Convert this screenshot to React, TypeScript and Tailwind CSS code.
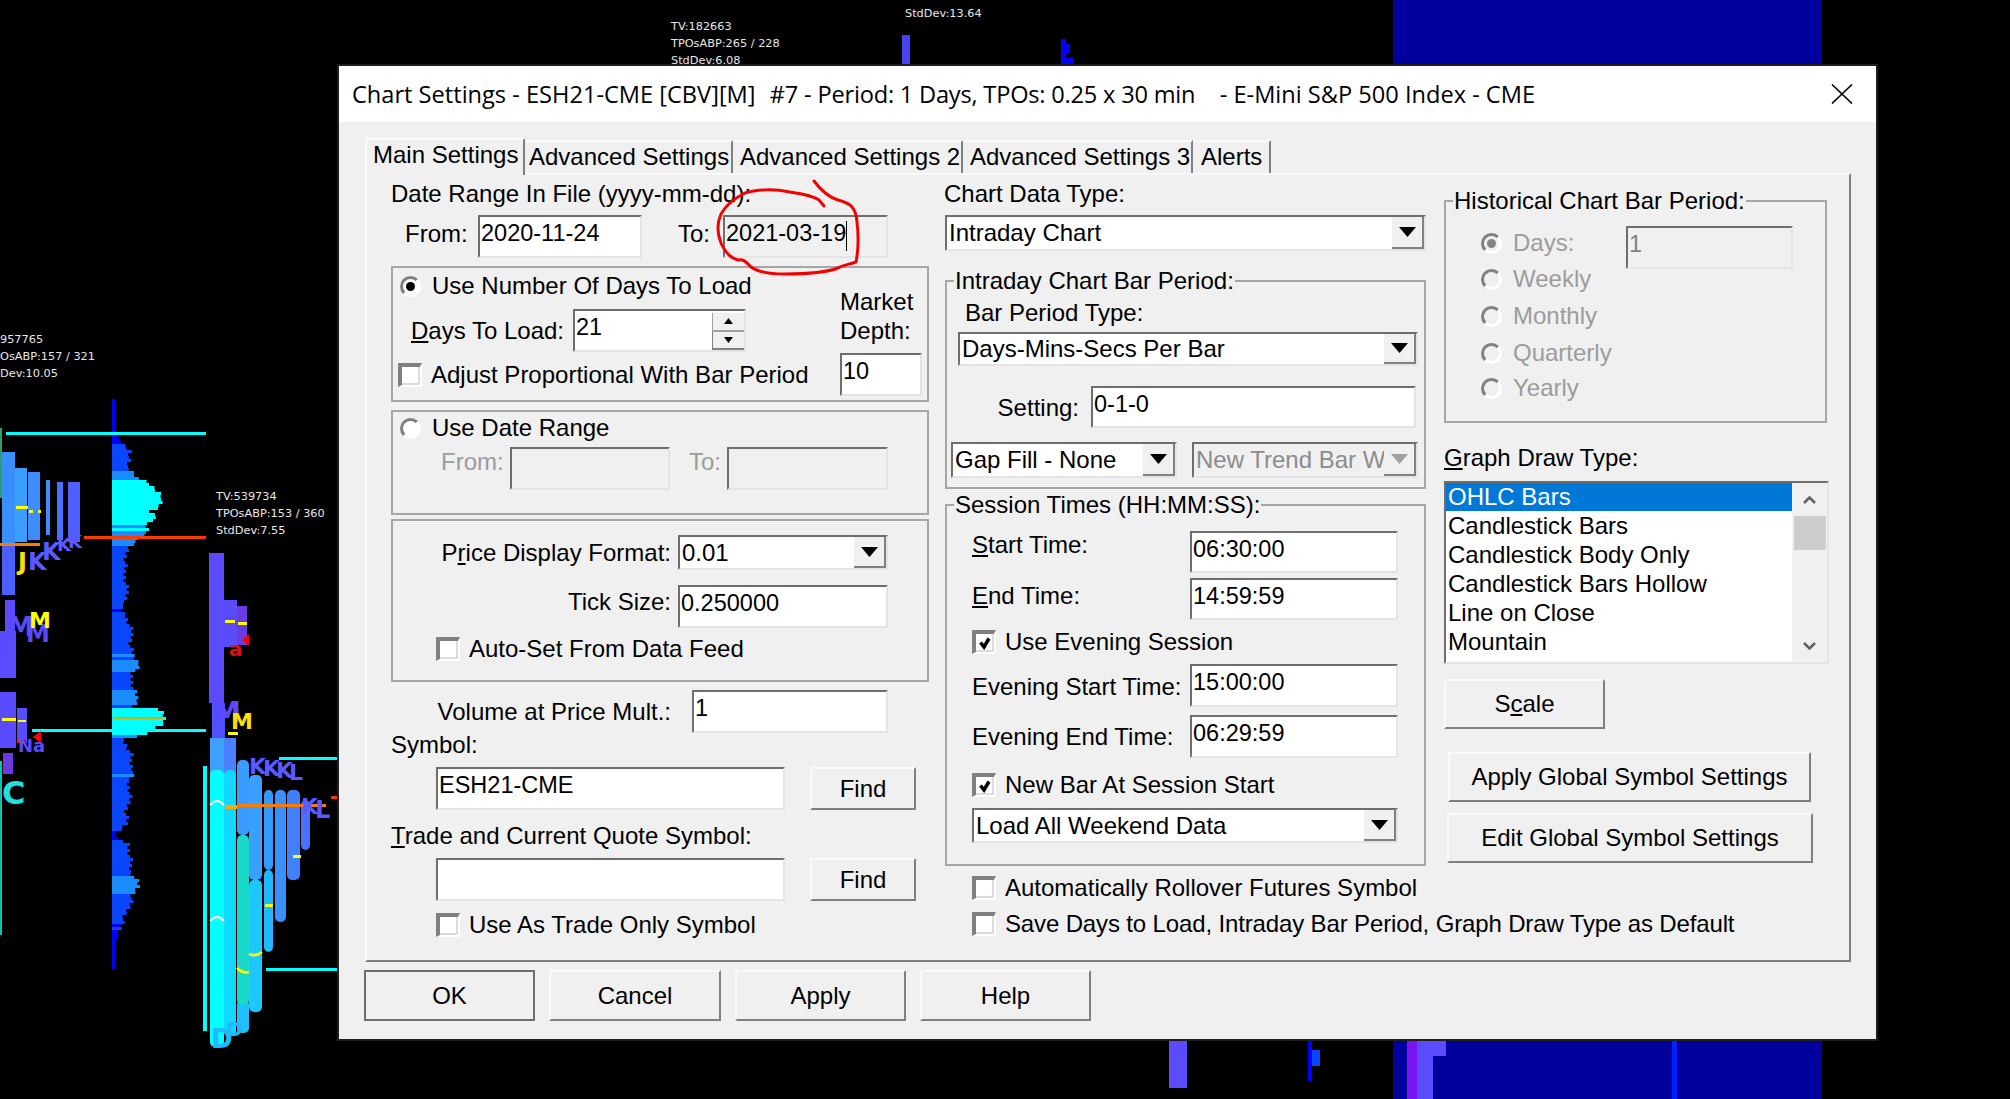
import React from 'react'

const sunken = 'border-2 border-t-[#6e6e6e] border-l-[#6e6e6e] border-b-[#e4e4e4] border-r-[#e4e4e4]'
const groupBox = 'relative box-border border-2 border-[#a6a6a6]'

function Edit({ value = '', disabled = false, gray = false, className = '', children }: { value?: string; disabled?: boolean; gray?: boolean; className?: string; children?: React.ReactNode }) {
  return (
    <div className={`${sunken} relative box-border flex shrink-0 items-start overflow-hidden pl-px pt-0.5 text-[23.5px] ${disabled ? 'bg-[#f0f0f0]' : 'bg-white'} ${gray ? 'text-[#808080]' : ''} ${className}`}>
      {value}
      {children}
    </div>
  )
}

function Arrow({ gray = false }: { gray?: boolean }) {
  return (
    <svg width="17" height="10" viewBox="0 0 17 10">
      <polygon points="0,0 17,0 8.5,10" fill={gray ? '#a0a0a0' : '#000'} />
    </svg>
  )
}

function Select({ value, disabled = false, className = '' }: { value: string; disabled?: boolean; className?: string }) {
  return (
    <div className={`${sunken} box-border flex shrink-0 items-center justify-between overflow-hidden ${disabled ? 'bg-[#f0f0f0] text-[#8c8c8c]' : 'bg-white'} ${className}`}>
      <span className="min-w-0 flex-1 overflow-hidden whitespace-nowrap pl-0.5">{value}</span>
      <div className="box-border flex h-full w-[32px] shrink-0 items-center justify-center border-r-2 border-b-2 border-r-[#808080] border-b-[#808080] bg-[#f0f0f0]">
        <Arrow gray={disabled} />
      </div>
    </div>
  )
}

function Check({ checked = false, label, className = '' }: { checked?: boolean; label: string; className?: string }) {
  return (
    <div className={`flex h-6 items-center ${className}`}>
      <div className="box-border flex h-6 w-6 shrink-0 items-center justify-center border-t-4 border-l-4 border-b-2 border-r-2 border-t-[#808080] border-l-[#808080] border-b-white border-r-white bg-white shadow-[inset_-2px_-2px_0_#dcdcdc]">
        {checked && (
          <svg width="14" height="14" viewBox="0 0 14 14">
            <path d="M2.5 6.5 L6 11 L11 2.5" fill="none" stroke="#000" strokeWidth="3.5" />
          </svg>
        )}
      </div>
      <span className="ml-[9px] whitespace-nowrap">{label}</span>
    </div>
  )
}

function Radio({ selected = false, disabled = false, label }: { selected?: boolean; disabled?: boolean; label: string }) {
  return (
    <div className={`flex h-7 items-center ${disabled ? 'text-[#9c9c9c]' : ''}`}>
      <div className={`box-border flex h-[21px] w-[21px] shrink-0 items-center justify-center rounded-full border-[3px] border-t-[#808080] border-l-[#808080] border-b-white border-r-white ${disabled ? 'bg-[#f0f0f0]' : 'bg-white'}`}>
        {selected && <div className={`h-[9px] w-[9px] rounded-full ${disabled ? 'bg-[#858585]' : 'bg-black'}`} />}
      </div>
      <span className="ml-[11px] whitespace-nowrap">{label}</span>
    </div>
  )
}

function Button({ label, isDefault = false, className = '' }: { label: React.ReactNode; isDefault?: boolean; className?: string }) {
  return (
    <div className={`box-border flex shrink-0 items-center justify-center whitespace-nowrap border-2 bg-[#f0f0f0] ${isDefault ? 'border-[#6e6e6e]' : 'border-t-[#fafafa] border-l-[#fafafa] border-r-[#808080] border-b-[#808080]'} ${className}`}>
      {label}
    </div>
  )
}

function Legend({ text, className = '' }: { text: string; className?: string }) {
  return <div className={`absolute -top-[15px] whitespace-nowrap bg-[#f0f0f0] px-px ${className}`}>{text}</div>
}

function LeftColumn() {
  return (
    <div className="flex w-[538px] shrink-0 flex-col">
      <div className="h-7">Date Range In File (yyyy-mm-dd):</div>
      <div className="mt-[7px] flex items-start pl-3.5">
        <div className="flex h-[38px] w-[73px] items-center">From:</div>
        <Edit value="2020-11-24" className="h-[43px] w-[164px]" />
        <div className="ml-9 flex h-[38px] w-[45px] items-center">To:</div>
        <Edit value="2021-03-19" disabled className="h-[43px] w-[165px]">
          <div className="mt-0.5 h-[30px] w-px bg-black" />
        </Edit>
      </div>

      <div className={`${groupBox} mt-2 flex h-[136px] w-[538px]`}>
        <div className="flex w-[447px] flex-col">
          <div className="flex h-9 items-center pl-[7px]">
            <Radio selected label="Use Number Of Days To Load" />
          </div>
          <div className="mt-[5px] flex items-start pl-[18px]">
            <div className="flex h-11 w-[162px] items-center"><span><u>D</u>ays To Load:</span></div>
            <Edit value="21" className="h-[43px] w-[173px] justify-between">
              <div className="flex h-full w-[32px] flex-col">
                <div className="flex h-1/2 items-center justify-center border-b-2 border-l border-[#a0a0a0] bg-[#f0f0f0]">
                  <svg width="9" height="6" viewBox="0 0 9 6"><polygon points="4.5,0 9,6 0,6" fill="#000" /></svg>
                </div>
                <div className="flex h-1/2 items-center justify-center border-b-2 border-l border-[#808080] bg-[#f0f0f0]">
                  <svg width="9" height="6" viewBox="0 0 9 6"><polygon points="0,0 9,0 4.5,6" fill="#000" /></svg>
                </div>
              </div>
            </Edit>
          </div>
          <Check label="Adjust Proportional With Bar Period" className="mt-2.5 pl-[5px]" />
        </div>
        <div className="flex w-[82px] flex-col pt-5">
          <div className="h-7">Market</div>
          <div className="mt-px h-7">Depth:</div>
          <Edit value="10" className="mt-2 h-[43px] w-[82px]" />
        </div>
      </div>

      <div className={`${groupBox} mt-2 h-[105px] w-[538px]`}>
        <div className="flex h-8 items-center pl-[7px]">
          <Radio label="Use Date Range" />
        </div>
        <div className="mt-[3px] flex items-start pl-12 text-[#9c9c9c]">
          <div className="flex h-[30px] w-[69px] items-center">From:</div>
          <Edit disabled className="h-[43px] w-[160px]" />
          <div className="ml-[19px] flex h-[30px] w-[38px] items-center">To:</div>
          <Edit disabled className="h-[43px] w-[161px]" />
        </div>
      </div>

      <div className={`${groupBox} mt-1 h-[163px] w-[538px]`}>
        <div className="mt-3.5 flex items-center">
          <div className="w-[278px] text-right">P<u>r</u>ice Display Format:</div>
          <Select value="0.01" className="ml-[7px] h-[35px] w-[210px]" />
        </div>
        <div className="mt-[15px] flex items-start">
          <div className="flex h-[34px] w-[278px] items-center justify-end">Tick Size:</div>
          <Edit value="0.250000" className="ml-[7px] h-[43px] w-[210px]" />
        </div>
        <Check label="Auto-Set From Data Feed" className="mt-[9px] pl-[43px]" />
      </div>

      <div className="mt-2 flex items-start">
        <div className="flex h-11 w-[280px] items-center justify-end whitespace-nowrap">Volume at Price Mult.:</div>
        <Edit value="1" className="ml-[21px] h-[43px] w-[196px]" />
      </div>
      <div className="-mt-[3px] h-7">Symbol:</div>
      <div className="mt-2 flex items-start pl-[45px]">
        <Edit value="ESH21-CME" className="h-[43px] w-[349px]" />
        <Button label="Find" className="ml-[25px] h-[43px] w-[106px]" />
      </div>
      <div className="mt-3 h-7"><u>T</u>rade and Current Quote Symbol:</div>
      <div className="mt-2 flex items-start pl-[45px]">
        <Edit className="h-[43px] w-[349px]" />
        <Button label="Find" className="ml-[25px] h-[43px] w-[106px]" />
      </div>
      <Check label="Use As Trade Only Symbol" className="mt-3 pl-[45px]" />
    </div>
  )
}

function MiddleColumn() {
  return (
    <div className="ml-4 flex w-[481px] shrink-0 flex-col">
      <div className="-ml-px h-7">Chart Data Type:</div>
      <Select value="Intraday Chart" className="mt-[7px] h-9 w-[481px]" />

      <div className={`${groupBox} mt-[29px] h-[209px] w-[481px]`}>
        <Legend text="Intraday Chart Bar Period:" className="left-[7px]" />
        <div className="mt-[17px] h-7 pl-[18px]">Bar Period Type:</div>
        <Select value="Days-Mins-Secs Per Bar" className="ml-[11px] mt-[5px] h-[34px] w-[460px]" />
        <div className="mt-5 flex items-start">
          <div className="flex h-11 w-[132px] items-center justify-end">Setting:</div>
          <Edit value="0-1-0" className="ml-3 h-[42px] w-[325px]" />
        </div>
        <div className="ml-1 mt-3 flex">
          <Select value="Gap Fill - None" className="h-9 w-[226px]" />
          <Select value="New Trend Bar W" disabled className="ml-[15px] h-9 w-[226px]" />
        </div>
      </div>

      <div className={`${groupBox} mt-[15px] h-[362px] w-[481px] pl-[25px]`}>
        <Legend text="Session Times (HH:MM:SS):" className="left-[7px]" />
        <div className="mt-[25px] flex items-start">
          <div className="flex h-7 w-[218px] items-center"><span><u>S</u>tart Time:</span></div>
          <Edit value="06:30:00" className="h-[42px] w-[208px]" />
        </div>
        <div className="mt-[5px] flex items-start">
          <div className="flex h-9 w-[218px] items-center"><span><u>E</u>nd Time:</span></div>
          <Edit value="14:59:59" className="h-[42px] w-[208px]" />
        </div>
        <Check checked label="Use Evening Session" className="mt-2.5" />
        <div className="mt-2.5 flex items-start">
          <div className="flex h-[46px] w-[218px] items-center whitespace-nowrap">Evening Start Time:</div>
          <Edit value="15:00:00" className="h-[43px] w-[208px]" />
        </div>
        <div className="mt-[5px] flex items-start">
          <div className="flex h-11 w-[218px] items-center whitespace-nowrap">Evening End Time:</div>
          <Edit value="06:29:59" className="h-[43px] w-[208px]" />
        </div>
        <Check checked label="New Bar At Session Start" className="mt-3.5" />
        <Select value="Load All Weekend Data" className="mt-[11px] h-[35px] w-[426px]" />
      </div>

      <Check label="Automatically Rollover Futures Symbol" className="mt-2.5 pl-[27px]" />
      <Check label="Save Days to Load, Intraday Bar Period, Graph Draw Type as Default" className="mt-3 pl-[27px] tracking-[-0.14px]" />
    </div>
  )
}

const historical = ['Weekly', 'Monthly', 'Quarterly', 'Yearly']
const historicalGaps = ['mt-2', 'mt-[9px]', 'mt-[9px]', 'mt-[7px]']
const drawTypes = ['Candlestick Bars', 'Candlestick Body Only', 'Candlestick Bars Hollow', 'Line on Close', 'Mountain', 'HLC Bars']

function RightColumn() {
  return (
    <div className="ml-[18px] flex w-[385px] shrink-0 flex-col">
      <div className={`${groupBox} mt-5 flex h-[223px] w-[383px]`}>
        <Legend text="Historical Chart Bar Period:" className="left-[7px]" />
        <div className="flex w-[180px] flex-col pl-[35px] pt-[27px]">
          <Radio selected disabled label="Days:" />
          {historical.map((label, i) => (
            <div key={label} className={historicalGaps[i]}>
              <Radio disabled label={label} />
            </div>
          ))}
        </div>
        <Edit value="1" disabled gray className="mt-6 h-[43px] w-[167px]" />
      </div>

      <div className="mt-[21px] h-7"><u>G</u>raph Draw Type:</div>
      <div className={`${sunken} mt-[9px] box-border flex h-[183px] w-[385px] overflow-hidden bg-white`}>
        <div className="w-[346px] shrink-0">
          <div className="h-[28px] bg-[#0078d7] pl-0.5 leading-[28px] text-white">OHLC Bars</div>
          {drawTypes.map(item => (
            <div key={item} className="h-[29px] pl-0.5 leading-[29px]">{item}</div>
          ))}
        </div>
        <div className="flex w-[35px] shrink-0 flex-col items-center bg-[#f0f0f0]">
          <svg className="mt-[13px]" width="13" height="8" viewBox="0 0 13 8"><path d="M1 7 L6.5 1.5 L12 7" fill="none" stroke="#606060" strokeWidth="2.5" /></svg>
          <div className="mt-3 h-[34px] w-[32px] bg-[#cdcdcd]" />
          <svg className="mt-[92px]" width="13" height="8" viewBox="0 0 13 8"><path d="M1 1 L6.5 6.5 L12 1" fill="none" stroke="#606060" strokeWidth="2.5" /></svg>
        </div>
      </div>
      <Button label={<span>S<u>c</u>ale</span>} className="mt-[15px] h-[50px] w-[161px]" />
      <Button label="Apply Global Symbol Settings" className="ml-1 mt-[23px] h-[50px] w-[363px]" />
      <Button label="Edit Global Symbol Settings" className="ml-[3px] mt-[11px] h-[50px] w-[366px]" />
    </div>
  )
}

const tabs = [
  { label: 'Main Settings', w: 'w-[160px]', pl: '', active: true },
  { label: 'Advanced Settings', w: 'w-[208px]', pl: 'pl-1' },
  { label: 'Advanced Settings 2', w: 'w-[230px]', pl: 'pl-[7px]' },
  { label: 'Advanced Settings 3', w: 'w-[230px]', pl: 'pl-[7px]' },
  { label: 'Alerts', w: 'w-[78px]', pl: 'pl-2' },
]

function Dialog() {
  return (
    <div className="absolute left-[339px] top-[66px] flex h-[973px] w-[1537px] flex-col bg-[#f0f0f0] font-['Liberation_Sans',Arial,sans-serif] text-[24px] leading-7 text-black shadow-[0_0_0_2px_#1f1f1f]">
      <div className="flex h-14 shrink-0 items-center justify-between whitespace-pre bg-white pl-[13px] pr-[23px] font-['Open_Sans',sans-serif] text-[23.6px]">
        <span>
          Chart Settings - ESH21-CME [CBV][M]  <span className="ml-0.5 tracking-[-0.2px]">#7 - Period: 1 Days, TPOs: 0.25 x 30 min</span>   <span className="ml-1.5">- E-Mini S&amp;P 500 Index - CME</span>
        </span>
        <svg width="22" height="20" viewBox="0 0 22 20">
          <path d="M1 0.5 L21 19.5 M21 0.5 L1 19.5" stroke="#000" strokeWidth="1.6" />
        </svg>
      </div>

      <div className="ml-[26px] mt-4 flex h-[35px] items-end">
        {tabs.map(tab => (
          <div
            key={tab.label}
            className={`box-border whitespace-nowrap border-r-2 border-r-[#808080] border-t-2 border-t-[#fafafa] ${tab.active ? 'relative -mb-0.5 h-[37px] border-l-2 border-l-[#fafafa] bg-[#f0f0f0] pl-1.5 pt-px' : 'h-[33px] pt-px'} ${tab.pl} ${tab.w}`}
          >
            {tab.label}
          </div>
        ))}
      </div>

      <div className="ml-[26px] box-border flex h-[789px] w-[1486px] border-2 border-t-[#fafafa] border-l-[#fafafa] border-r-[#808080] border-b-[#808080] pl-6 pt-[5px]">
        <LeftColumn />
        <MiddleColumn />
        <RightColumn />
      </div>

      <div className="ml-[25px] mt-2 flex">
        <Button label="OK" isDefault className="h-[51px] w-[171px]" />
        <Button label="Cancel" className="ml-3.5 h-[51px] w-[172px]" />
        <Button label="Apply" className="ml-3.5 h-[51px] w-[171px]" />
        <Button label="Help" className="ml-3.5 h-[51px] w-[171px]" />
      </div>
    </div>
  )
}

// y, width knots of the volume profile behind the dialog
const profileKnots: [number, number][] = [
  [399, 3], [432, 4], [443, 10], [450, 19], [465, 14], [470, 20], [478, 28], [483, 37], [490, 45], [494, 51],
  [500, 48], [506, 46], [510, 38], [517, 47], [522, 32], [530, 36], [537, 28], [545, 16], [555, 14], [570, 12],
  [590, 15], [600, 14], [607, 7], [615, 14], [625, 18], [635, 20], [645, 18], [655, 21], [665, 30], [670, 18],
  [690, 22], [700, 26], [705, 22], [707, 45], [712, 50], [717, 52], [722, 52], [728, 42], [735, 25], [738, 10],
  [745, 15], [752, 19], [760, 18], [770, 22], [780, 15], [790, 18], [800, 17], [810, 14], [822, 14], [835, 3],
  [843, 16], [855, 18], [870, 18], [880, 25], [885, 26], [895, 20], [905, 17], [920, 10], [935, 5], [950, 3], [968, 3],
]

function profileRows() {
  const rows: { y: number; w: number; fill: string }[] = []
  for (let y = 399; y < 968; y += 3) {
    const k = profileKnots.findIndex(p => p[0] > y)
    const [y0, w0] = profileKnots[Math.max(k - 1, 0)]
    const [y1, w1] = profileKnots[Math.max(k, 0)]
    const jitter = [0, 2, -1, 1, -2, 0, 3][Math.floor(y / 3) % 7]
    const w = Math.max(2, w0 + ((w1 - w0) * (y - y0)) / (y1 - y0) + (w0 > 6 ? jitter : 0))
    const fill = w < 9 ? '#0000ff' : w < 22 ? '#0a46ff' : w < 34 ? '#1a8cff' : '#00ffff'
    rows.push({ y, w, fill })
  }
  return rows
}

const blocks: [number, number, number, number, string][] = [
  [1393, 0, 429, 66, '#00009c'],
  [1393, 1040, 429, 59, '#00009c'],
  [902, 35, 8, 31, '#4646f0'],
  [1061, 39, 5, 27, '#0000ff'],
  [1066, 44, 4, 10, '#0000ff'],
  [1066, 58, 8, 8, '#0000ff'],
  [1169, 1040, 18, 48, '#5b4bff'],
  [1308, 1040, 4, 41, '#0000ff'],
  [1312, 1050, 8, 16, '#0a46ff'],
  [1407, 1040, 10, 59, '#7a14f0'],
  [1417, 1040, 16, 59, '#5b4bff'],
  [1430, 1040, 16, 16, '#5b4bff'],
  [1672, 1040, 5, 59, '#0020ff'],
  // left partial TPO profile
  [0, 428, 2, 70, '#2f9e6f'],
  [2, 452, 13, 93, '#3a8fff'],
  [15, 468, 12, 74, '#3a9fff'],
  [28, 472, 12, 68, '#3f8cff'],
  [46, 480, 4, 55, '#3f8cff'],
  [57, 482, 6, 58, '#4a70ff'],
  [68, 482, 12, 60, '#5060ff'],
  [2, 545, 13, 50, '#4a60ff'],
  [5, 600, 10, 31, '#5b4bff'],
  [0, 631, 16, 47, '#5b4bff'],
  [0, 692, 16, 56, '#5b4bff'],
  [17, 708, 10, 35, '#5b4bff'],
  [3, 753, 10, 21, '#6a3ce0'],
  [0, 761, 2, 174, '#10c0b0'],
  [16, 506, 12, 3, '#ffff00'],
  [29, 510, 4, 3, '#ffff00'],
  [38, 510, 3, 3, '#ffff00'],
  [0, 543, 40, 3, '#ff7a00'],
  [2, 718, 14, 3, '#ffff00'],
  [18, 720, 8, 2, '#ffff00'],
  [18, 740, 8, 3, '#ff0000'],
  // level lines
  [6, 432, 200, 3, '#00ffff'],
  [84, 536, 122, 3, '#ff3c00'],
  [32, 729, 174, 3, '#00ffff'],
  [279, 757, 60, 3, '#00ffff'],
  [266, 968, 73, 3, '#00ffff'],
  [203, 766, 4, 265, '#00ffff'],
  [331, 796, 8, 3, '#ff3c00'],
  // main TPO columns
  [209, 553, 15, 150, '#5b4bff'],
  [224, 600, 13, 47, '#5b4bff'],
  [237, 606, 10, 39, '#6a3ce0'],
  [212, 703, 13, 36, '#5050ff'],
  [226, 738, 10, 40, '#4070ff'],
  [210, 738, 14, 40, '#3f9fff'],
  [224, 738, 12, 40, '#4a80ff'],
]

const columns: [number, number, number, number, string][] = [
  [210, 770, 14, 277, '#00ffff'],
  [224, 770, 12, 266, '#10d8ff'],
  [237, 1000, 12, 33, '#20c0ff'],
  [237, 835, 12, 170, '#19d9c8'],
  [237, 760, 12, 75, '#3a9cff'],
  [249, 880, 13, 132, '#1cc8ff'],
  [249, 775, 13, 105, '#3aa0ff'],
  [264, 870, 9, 82, '#20b8ff'],
  [264, 790, 9, 80, '#3399ff'],
  [275, 790, 11, 132, '#3a90ff'],
  [287, 790, 13, 90, '#4080ff'],
  [301, 800, 9, 50, '#4a70ff'],
]

const marks: [number, number, number, number, string][] = [
  [225, 620, 10, 3, '#ffff00'],
  [238, 622, 9, 3, '#ffff00'],
  [228, 732, 10, 3, '#ffff00'],
  [225, 805, 12, 4, '#ffaa00'],
  [265, 904, 8, 3, '#ffff00'],
  [293, 855, 8, 3, '#ffff00'],
  [237, 804, 80, 3, '#ff7a00'],
  [317, 804, 9, 3, '#ff7a00'],
]

const letters: [string, number, number, string, number][] = [
  ['J', 18, 570, '#ffe000', 24],
  ['K', 28, 570, '#5a5aff', 24],
  ['K', 42, 560, '#5a5aff', 24],
  ['K', 57, 551, '#5a5aff', 18],
  ['K', 68, 548, '#5a5aff', 18],
  ['M', 8, 636, '#5a4aff', 26],
  ['M', 26, 642, '#5a4aff', 24],
  ['M', 29, 628, '#ffff00', 22],
  ['Na', 18, 752, '#5b4bff', 18],
  ['C', 2, 804, '#20e0e0', 32],
  ['M', 213, 722, '#5a4aff', 28],
  ['M', 231, 729, '#ffe000', 22],
  ['a', 229, 656, '#e01010', 20],
  ['K', 249, 774, '#5a5aff', 22],
  ['K', 263, 776, '#5a5aff', 22],
  ['K', 276, 778, '#5a5aff', 22],
  ['L', 289, 780, '#5a5aff', 22],
  ['K', 301, 814, '#5a5aff', 22],
  ['L', 315, 818, '#5a5aff', 24],
  ['D', 211, 1048, '#20b8ff', 26],
  ['D', 226, 1036, '#20b8ff', 20],
]

function ChartBackground() {
  return (
    <svg className="absolute left-0 top-0" width="2010" height="1099" viewBox="0 0 2010 1099">
      {profileRows().map(r => (
        <rect key={r.y} x="112" y={r.y} width={r.w} height="3" fill={r.fill} />
      ))}
      <rect x="113" y="717" width="50" height="2" fill="#c8b400" />
      {blocks.map(([x, y, w, h, fill], i) => (
        <rect key={i} x={x} y={y} width={w} height={h} fill={fill} />
      ))}
      {columns.map(([x, y, w, h, fill], i) => (
        <rect key={i} x={x} y={y} width={w} height={h} rx="5" fill={fill} />
      ))}
      {marks.map(([x, y, w, h, fill], i) => (
        <rect key={i} x={x} y={y} width={w} height={h} fill={fill} />
      ))}
      <polygon points="33,737 41,731 41,743" fill="#ff0000" />
      <polygon points="242,640 249,634 249,646" fill="#ff0000" />
      <path d="M210 805 Q217 797 224 805 M210 921 Q217 913 224 921" fill="none" stroke="#fff" strokeWidth="2" />
      <path d="M237 968 Q243 974 249 972 M249 954 Q256 957 262 952" fill="none" stroke="#ffff00" strokeWidth="2.5" />
      {letters.map(([t, x, y, fill, size], i) => (
        <text key={i} x={x} y={y} fill={fill} fontSize={size} fontWeight="700" fontFamily="'DejaVu Sans', sans-serif">{t}</text>
      ))}
      <g fill="#e8e8e8" fontSize="11.3" fontFamily="'DejaVu Sans', sans-serif">
        <text x="0" y="343">957765</text>
        <text x="0" y="360">OsABP:157 / 321</text>
        <text x="0" y="377">Dev:10.05</text>
        <text x="216" y="500">TV:539734</text>
        <text x="216" y="517">TPOsABP:153 / 360</text>
        <text x="216" y="534">StdDev:7.55</text>
        <text x="671" y="30">TV:182663</text>
        <text x="671" y="47">TPOsABP:265 / 228</text>
        <text x="671" y="64">StdDev:6.08</text>
        <text x="905" y="17">StdDev:13.64</text>
      </g>
    </svg>
  )
}

function RedCircle() {
  return (
    <svg className="pointer-events-none absolute left-0 top-0" width="2010" height="1099" viewBox="0 0 2010 1099">
      <path
        d="M814 181 C820 189 828 197 838 200 C850 203 856 207 857 222 C859 238 858 252 856 262 C848 265 843 265 838 268 C825 273 805 274 785 274 C770 274 758 272 751 267 C746 262 744 259 738 260 C730 258 725 252 721 243 C717 233 717 223 721 214 C726 205 735 198 745 193 C757 189 775 189 790 192 C803 194 815 197 819 200 L824 206"
        fill="none"
        stroke="#f40000"
        strokeWidth="3"
        strokeLinecap="round"
      />
    </svg>
  )
}

export default function App() {
  return (
    <div className="relative h-[1099px] w-[2010px] overflow-hidden bg-black">
      <ChartBackground />
      <Dialog />
      <RedCircle />
    </div>
  )
}
